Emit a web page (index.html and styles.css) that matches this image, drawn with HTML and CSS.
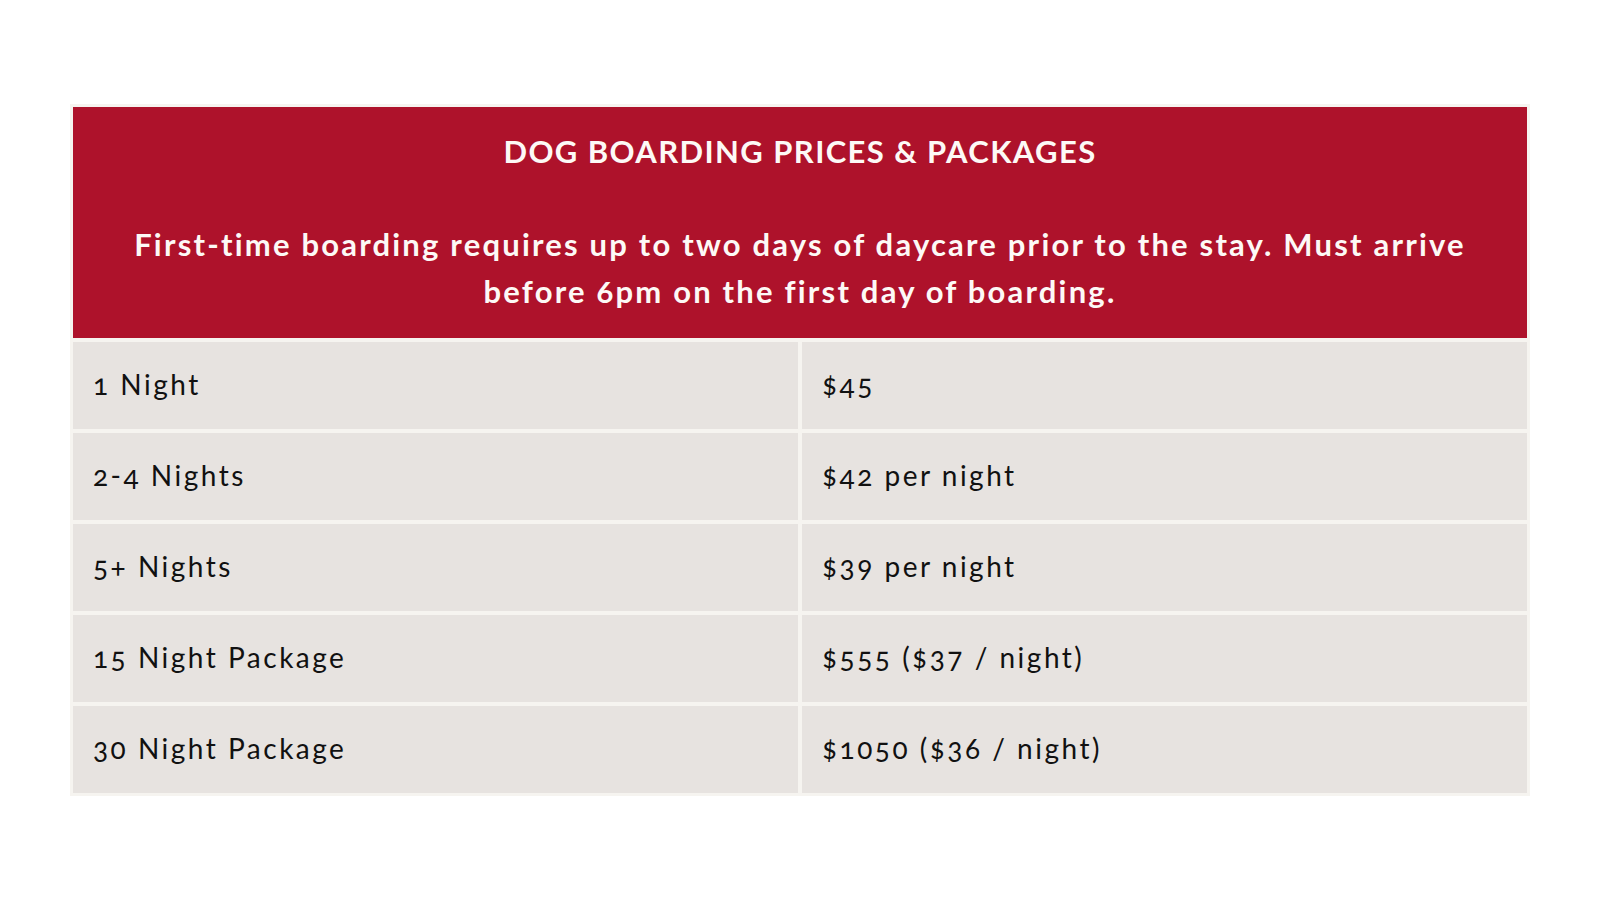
FILE: index.html
```html
<!DOCTYPE html>
<html lang="en">
<head>
<meta charset="utf-8">
<title>Dog Boarding Prices &amp; Packages</title>
<link rel="stylesheet" href="styles.css">
</head>
<body>
<main class="page">
  <section class="price-table">
    <header class="head">
      <h1 class="title">DOG BOARDING PRICES &amp; PACKAGES</h1>
      <p class="note">First-time boarding requires up to two days of daycare prior to the stay. Must arrive before 6pm on the first day of boarding.</p>
    </header>
    <div class="cell">1 Night</div><div class="cell">$45</div>
    <div class="cell">2-4 Nights</div><div class="cell">$42 per night</div>
    <div class="cell">5+ Nights</div><div class="cell">$39 per night</div>
    <div class="cell">15 Night Package</div><div class="cell">$555 ($37 / night)</div>
    <div class="cell">30 Night Package</div><div class="cell">$1050 ($36 / night)</div>
  </section>
</main>
</body>
</html>
```

FILE: styles.css
```css
html, body {
  margin: 0;
  padding: 0;
  background: #ffffff;
}

body {
  font-family: Lato, "Open Sans", "DejaVu Sans", sans-serif;
  font-variant-numeric: oldstyle-nums;
  color: #111111;
}

.page {
  padding: 104px 70px 0 70px;
}

.price-table {
  width: 1460px;
  box-sizing: border-box;
  display: grid;
  grid-template-columns: 1fr 1fr;
  grid-template-rows: 231px;
  grid-auto-rows: 87px;
  gap: 4px;
  padding: 3px;
  background: #f6f4f0;
}

.head {
  grid-column: 1 / 3;
  background: #ae122b;
  color: #fdf9f6;
  text-align: center;
  padding: 24px 50px 23px;
  box-sizing: border-box;
}

.title {
  margin: 0;
  font-size: 31px;
  line-height: 40px;
  font-weight: 700;
  letter-spacing: 1.4px;
}

.note {
  margin: 50px 0 0;
  font-size: 31px;
  line-height: 47px;
  font-weight: 700;
  letter-spacing: 2.2px;
}

.cell {
  background: #e7e3e0;
  display: flex;
  align-items: center;
  padding: 0 0 3px 20px;
  font-size: 28px;
  letter-spacing: 2.5px;
}
```
